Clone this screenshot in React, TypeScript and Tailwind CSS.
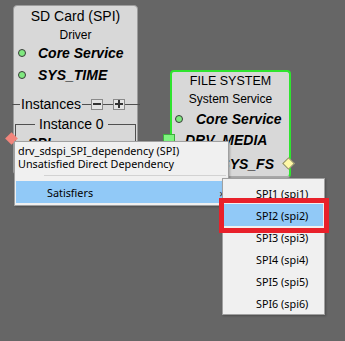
import React from "react";

const boxFont = { fontFamily: '"Liberation Sans", Arial, sans-serif' };
const menuFont = { fontFamily: '"Noto Sans", "Liberation Sans", sans-serif' };

function Dot() {
  return <span className="block h-[8px] w-[8px] shrink-0 rounded-full border border-[#3a3a3a] bg-[#7fe87f]" />;
}

function PortRow({ label, className }: { label: string; className?: string }) {
  return (
    <div className={`flex h-[18px] items-center ${className ?? ""}`}>
      <Dot />
      <span className="text-[14px] font-bold italic leading-[18px] text-black">{label}</span>
    </div>
  );
}

function SmallButton({ plus }: { plus?: boolean }) {
  return (
    <span className="flex h-[11px] w-[12px] shrink-0 items-center justify-center border border-[#8a8a8a] bg-[#e4e4e4]">
      <svg width="8" height="8" viewBox="0 0 8 8">
        <rect x="0" y="3" width="8" height="2" fill="#333" />
        {plus && <rect x="3" y="0" width="2" height="8" fill="#333" />}
      </svg>
    </span>
  );
}

function SdCardNode() {
  return (
    <div
      className="absolute left-[13px] top-[5px] flex h-[170px] w-[125px] flex-col rounded-[4px] border border-[#9c9c9c] bg-[#d8d8d8]"
      style={boxFont}
    >
      <div className="shrink-0 pt-[2px] text-center text-[14px] leading-[16px] text-black">SD Card (SPI)</div>
      <div className="mt-[4px] shrink-0 text-center text-[12px] leading-[14px] text-black">Driver</div>
      <PortRow label="Core Service" className="mt-[2px] shrink-0 gap-[12px] pl-[4px]" />
      <PortRow label="SYS_TIME" className="mt-[4px] shrink-0 gap-[12px] pl-[4px]" />

      <div className="-ml-[2px] -mr-[3px] mt-[12px] flex h-[16px] shrink-0 items-center">
        <span className="h-px w-[8px] bg-[#505050]" />
        <span className="px-[1px] text-[14px] leading-[16px] text-black">Instances</span>
        <span className="h-px w-[9px] bg-[#505050]" />
        <SmallButton />
        <span className="h-px w-[10px] bg-[#505050]" />
        <SmallButton plus />
        <span className="h-px flex-1 bg-[#505050]" />
      </div>

      <div className="mx-[1px] mt-[5px] flex flex-col">
        <div className="flex h-[14px]">
          <span className="h-[7px] w-[20px] self-end border-l border-t border-[#505050]" />
          <span className="px-[4px] text-[14px] leading-[14px] text-black">Instance 0</span>
          <span className="h-[7px] flex-1 self-end border-r border-t border-[#505050]" />
        </div>
        <div className="h-[40px] border-x border-[#505050] pl-[12px]">
          {/* lower half of the label sits under the context menu */}
          <div className="h-[10px] overflow-hidden">
            <span className="text-[14px] font-bold italic leading-[14px] text-black">SPI</span>
          </div>
        </div>
      </div>
    </div>
  );
}

function FileSystemNode() {
  return (
    <div
      className="absolute left-[170px] top-[70px] flex h-[108px] w-[121px] flex-col rounded-[4px] border-2 border-[#2fe42f] border-b-[#a8a8a8] bg-[#d8d8d8]"
      style={boxFont}
    >
      <div className="pt-[1px] text-center text-[12.5px] leading-[16px] text-black">FILE SYSTEM</div>
      <div className="mt-[3px] text-center text-[12px] leading-[14px] text-black">System Service</div>
      <PortRow label="Core Service" className="mt-[4px] gap-[13px] pl-[3px]" />
      <div className="mt-[3px] pl-[13px] text-[14px] font-bold italic leading-[18px] text-black">DRV_MEDIA</div>
      <div className="mt-[6px] pr-[15px] text-right text-[14px] font-bold italic leading-[18px] text-black">SYS_FS</div>
    </div>
  );
}

const satisfiers = ["SPI1 (spi1)", "SPI2 (spi2)", "SPI3 (spi3)", "SPI4 (spi4)", "SPI5 (spi5)", "SPI6 (spi6)"];

export default function App() {
  return (
    <div className="relative h-[341px] w-[345px] overflow-hidden bg-[#666666]">
      <SdCardNode />
      <FileSystemNode />

      {/* connectors */}
      <span className="absolute left-[163px] top-[134px] h-[12px] w-[12px] border border-[#3fae3f] bg-[#7ff57f]" />
      <span className="absolute left-[284px] top-[159px] h-[9px] w-[9px] rotate-45 border border-[#8a8a6a] bg-[#fff8a6]" />
      <span className="absolute left-[7px] top-[134px] h-[9px] w-[9px] rotate-45 bg-[#f2857c]" />

      {/* context menu */}
      <div
        className="absolute left-[14px] top-[141px] flex h-[65px] w-[215px] flex-col border border-[#a0a0a0] bg-[#f0f0f0] shadow-[1px_1px_2px_rgba(0,0,0,0.25)]"
        style={menuFont}
      >
        <div className="pl-[3px] pt-[2px] text-[10.8px] leading-[13px] text-black">drv_sdspi_SPI_dependency (SPI)</div>
        <div className="pl-[3px] text-[10.8px] leading-[13px] text-black">Unsatisfied Direct Dependency</div>
        <div className="ml-[29px] mr-[2px] mt-[5px] h-px bg-[#d2d2d2]" />
        <div className="mx-[1px] mt-[5px] flex h-[22px] items-center justify-between bg-[#91c9f7] pl-[31px] pr-[4px]">
          <span className="text-[10.8px] leading-[13px] text-black">Satisfiers</span>
          <span className="text-[11px] leading-[13px] text-[#333]">›</span>
        </div>
      </div>

      {/* submenu */}
      <div
        className="absolute left-[222px] top-[178px] flex h-[137px] w-[103px] flex-col border border-[#a0a0a0] bg-[#f0f0f0] pt-[3px] shadow-[1px_1px_2px_rgba(0,0,0,0.25)]"
        style={menuFont}
      >
        {satisfiers.map((s, i) => (
          <div
            key={s}
            className={`mx-[1px] flex h-[22px] items-center pl-[32px] text-[10.8px] leading-[13px] text-black ${
              i === 1 ? "bg-[#91c9f7]" : ""
            }`}
          >
            {s}
          </div>
        ))}
      </div>

      {/* highlight annotation */}
      <span className="absolute left-[219px] top-[198px] h-[35px] w-[110px] border-[5px] border-[#e8202a]" />
    </div>
  );
}
